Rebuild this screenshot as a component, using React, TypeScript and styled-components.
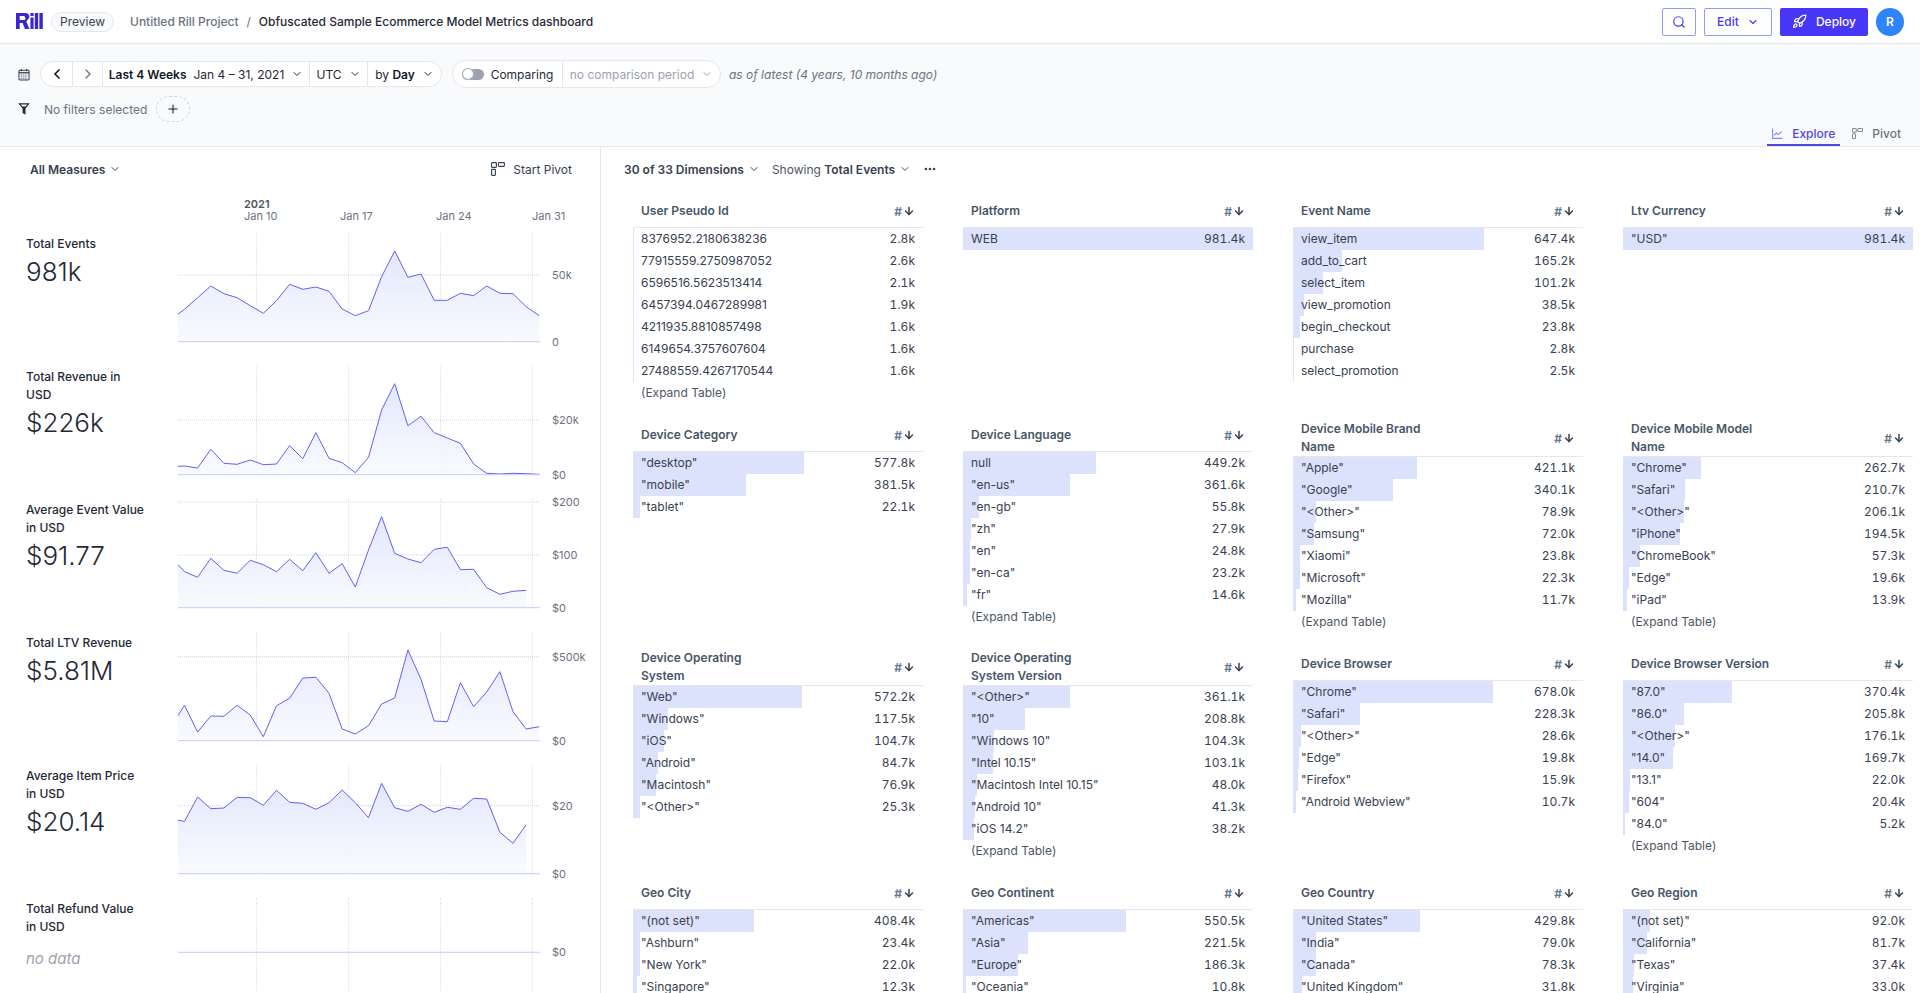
import styled, { createGlobalStyle } from "styled-components";
import { ArrowDown, ChevronDown, ChevronLeft, ChevronRight, Ellipsis, Plus, Rocket, Search } from "lucide-react";

const GlobalStyle = createGlobalStyle`
  html, body {
    margin: 0;
    height: 100%;
    overflow: hidden;
    background: #fff;
    font-family: Inter, "Noto Sans", sans-serif;
    font-size: 12px;
    color: #374151;
  }
`;

const Page = styled.div`
  display: flex;
  flex-direction: column;
  height: 100vh;
  overflow: hidden;
`;

const Header = styled.header`
  flex: none;
  box-sizing: border-box;
  display: flex;
  align-items: center;
  height: 44px;
  padding: 0 16px;
  border-bottom: 1px solid #e5e7eb;
`;

const Logo = styled.svg`
  width: 27px;
  height: 16px;
  flex: none;
  margin-top: -1px;
`;

const PreviewPill = styled.span`
  box-sizing: border-box;
  height: 20px;
  width: 63px;
  margin-left: 8px;
  border: 1px solid #e5e7eb;
  border-radius: 10px;
  background: #f9fafb;
  text-align: center;
  line-height: 18px;
  color: #374151;
`;

const Crumb = styled.span`
  margin-left: 16px;
  color: #6b7280;
  font-weight: 500;
`;

const Slash = styled.span`
  margin: 0 8px;
  color: #6b7280;
`;

const CrumbTitle = styled.span`
  color: #1f2937;
  font-weight: 500;
`;

const HeaderActions = styled.div`
  margin-left: auto;
  display: flex;
  align-items: center;
  gap: 8px;
`;

const OutlineButton = styled.button<{ $width: number }>`
  box-sizing: border-box;
  display: flex;
  align-items: center;
  justify-content: center;
  gap: 8px;
  width: ${(p) => p.$width}px;
  height: 28px;
  padding: 0;
  border: 1px solid #8f9bfb;
  border-radius: 2px;
  background: #fff;
  color: #4a3af0;
  font: 500 12px Inter, sans-serif;
`;

const DeployButton = styled.button`
  box-sizing: border-box;
  display: flex;
  align-items: center;
  justify-content: center;
  gap: 9px;
  width: 88px;
  height: 28px;
  padding: 0;
  border: none;
  border-radius: 2px;
  background: #4736f5;
  color: #fff;
  font: 500 12px Inter, sans-serif;
`;

const Avatar = styled.div`
  width: 28px;
  height: 28px;
  border-radius: 50%;
  background: #2f84fb;
  color: #fff;
  font-weight: 600;
  text-align: center;
  line-height: 28px;
`;

const Toolbar = styled.section`
  flex: none;
  display: flex;
  flex-direction: column;
  padding-top: 16px;
  background: #f9fafb;
  border-bottom: 1px solid #e5e7eb;
`;

const ToolRow = styled.div<{ $gap: number }>`
  display: flex;
  align-items: center;
  height: 28px;
  gap: ${(p) => p.$gap}px;
  padding-left: 18px;
`;

const FilterRow = styled(ToolRow)`
  height: 26px;
  margin-top: 8px;
`;

const TimePill = styled.div`
  box-sizing: border-box;
  display: flex;
  height: 26px;
  border: 1px solid #e5e7eb;
  border-radius: 13px;
  background: #fff;
  overflow: hidden;
`;

const Segment = styled.div<{ $width: number }>`
  box-sizing: border-box;
  display: flex;
  align-items: center;
  justify-content: center;
  gap: 7px;
  width: ${(p) => p.$width}px;
  color: #1f2937;
  & + & {
    border-left: 1px solid #e5e7eb;
  }
`;

const Strong = styled.b`
  font-weight: 600;
  color: #111827;
`;

const CompareWrap = styled(TimePill)`
  height: 28px;
  border-radius: 14px;
`;

const Toggle = styled.span`
  position: relative;
  display: block;
  width: 22px;
  height: 11px;
  border-radius: 6px;
  background: #9ca3af;
  &::after {
    content: "";
    position: absolute;
    left: 0;
    top: -0.5px;
    width: 12px;
    height: 12px;
    border-radius: 50%;
    background: #fff;
    box-shadow: 0 0 0 1px #9ca3af inset;
  }
`;

const Muted = styled.span`
  color: #9ca3af;
`;

const AsOf = styled.span`
  margin-left: -2px;
  font-style: italic;
  color: #6b7280;
`;

const NoFilters = styled.span`
  color: #6b7280;
`;

const AddFilter = styled.div`
  box-sizing: border-box;
  display: flex;
  align-items: center;
  justify-content: center;
  width: 34px;
  height: 26px;
  margin-left: -5px;
  border: 1px dashed #d1d5db;
  border-radius: 13px;
  color: #111827;
`;

const Tabs = styled.div`
  display: flex;
  justify-content: flex-end;
  gap: 7px;
  height: 24px;
  padding-right: 14px;
`;

const Tab = styled.div<{ $active?: boolean }>`
  box-sizing: border-box;
  display: flex;
  align-items: center;
  gap: 9px;
  padding: 0 5px 0 5px;
  height: 24px;
  font-weight: 500;
  color: ${(p) => (p.$active ? "#4f46e5" : "#6b7280")};
  border-bottom: 2px solid ${(p) => (p.$active ? "#4f46e5" : "transparent")};
`;

const Body = styled.main`
  flex: 1;
  display: flex;
  min-height: 0;
`;

const LeftPanel = styled.aside`
  flex: none;
  box-sizing: border-box;
  width: 601px;
  border-right: 1px solid #e5e7eb;
  overflow: hidden;
`;

const MeasuresBar = styled.div`
  display: flex;
  align-items: center;
  justify-content: space-between;
  height: 44px;
  padding: 0 28px 0 30px;
`;

const BarButton = styled.div`
  display: flex;
  align-items: center;
  gap: 4px;
  font-weight: 600;
  color: #374151;
`;

const PivotLink = styled.div`
  display: flex;
  align-items: center;
  gap: 8px;
  color: #374151;
`;

const TimeAxis = styled.svg`
  display: block;
  width: 422px;
  height: 42px;
  margin-left: 178px;
`;

const AxisYear = styled.text`
  font: 600 11px Inter, sans-serif;
  fill: #4b5563;
`;

const AxisLabel = styled.text`
  font: 400 11px Inter, sans-serif;
  fill: #6b7280;
`;

const MetricRow = styled.div`
  display: grid;
  grid-template-columns: 152px 422px;
  height: 133px;
  padding-left: 26px;
`;

const MetricInfo = styled.div`
  padding-top: 2px;
`;

const MetricTitle = styled.div`
  max-width: 119.5px;
  line-height: 18px;
  font-weight: 500;
  color: #1f2937;
`;

const MetricValue = styled.div`
  font-size: 26px;
  font-weight: 300;
  line-height: 38px;
  color: #1f2937;
`;

const NoData = styled.div`
  padding-top: 4px;
  font-size: 15px;
  font-style: italic;
  line-height: 38px;
  color: #9ca3af;
`;

const ChartSvg = styled.svg`
  display: block;
  width: 422px;
  height: 133px;
  overflow: visible;
`;

const RightPanel = styled.section`
  flex: 1;
  min-width: 0;
  overflow: hidden;
`;

const DimensionsBar = styled.div`
  display: flex;
  align-items: center;
  gap: 12px;
  height: 44px;
  padding-left: 23px;
`;

const Showing = styled.div`
  display: flex;
  align-items: center;
  gap: 4px;
  color: #4b5563;
  b {
    font-weight: 600;
    color: #374151;
  }
`;

const BoardGrid = styled.div`
  display: grid;
  grid-template-columns: repeat(4, 290px);
  column-gap: 40px;
  row-gap: 14px;
  align-items: start;
  padding: 3px 0 0 32px;
`;

const BoardHeader = styled.div<{ $tall: boolean }>`
  box-sizing: border-box;
  display: flex;
  align-items: center;
  justify-content: space-between;
  min-height: 34px;
  padding: ${(p) => (p.$tall ? "2px 8px 0 8px" : "1px 8px 0 8px")};
  border-bottom: 1.5px solid #e5e7eb;
`;

const BoardTitle = styled.div`
  max-width: 142px;
  line-height: 18px;
  font-weight: 600;
  color: #475569;
`;

const SortMark = styled.div`
  display: flex;
  align-items: center;
  gap: 1px;
  font-weight: 600;
  color: #64748b;
  svg {
    color: #374151;
  }
`;

const BoardRow = styled.div`
  position: relative;
  display: flex;
  justify-content: space-between;
  height: 22px;
  padding: 0 8px;
  line-height: 22px;
  color: #374151;
`;

const RowBar = styled.div`
  position: absolute;
  left: 0;
  top: 0;
  bottom: 0;
  background: #dce2fc;
`;

const RowLabel = styled.span`
  position: relative;
`;

const RowValue = styled.span`
  position: relative;
  font-variant-numeric: tabular-nums;
  font-feature-settings: "tnum";
`;

const ExpandRow = styled.div`
  height: 22px;
  padding-left: 8px;
  line-height: 22px;
  color: #4b5563;
`;

const TOTAL = 981.4;

type Board = { title: string; rows: [string, number][]; expand?: boolean };

const boards: Board[] = [
  {
    title: "User Pseudo Id",
    expand: true,
    rows: [
      ["8376952.2180638236", 2.8],
      ["77915559.2750987052", 2.6],
      ["6596516.5623513414", 2.1],
      ["6457394.0467289981", 1.9],
      ["4211935.8810857498", 1.6],
      ["6149654.3757607604", 1.6],
      ["27488559.4267170544", 1.6],
    ],
  },
  { title: "Platform", rows: [["WEB", 981.4]] },
  {
    title: "Event Name",
    rows: [
      ["view_item", 647.4],
      ["add_to_cart", 165.2],
      ["select_item", 101.2],
      ["view_promotion", 38.5],
      ["begin_checkout", 23.8],
      ["purchase", 2.8],
      ["select_promotion", 2.5],
    ],
  },
  { title: "Ltv Currency", rows: [['"USD"', 981.4]] },
  {
    title: "Device Category",
    rows: [
      ['"desktop"', 577.8],
      ['"mobile"', 381.5],
      ['"tablet"', 22.1],
    ],
  },
  {
    title: "Device Language",
    expand: true,
    rows: [
      ["null", 449.2],
      ['"en-us"', 361.6],
      ['"en-gb"', 55.8],
      ['"zh"', 27.9],
      ['"en"', 24.8],
      ['"en-ca"', 23.2],
      ['"fr"', 14.6],
    ],
  },
  {
    title: "Device Mobile Brand Name",
    expand: true,
    rows: [
      ['"Apple"', 421.1],
      ['"Google"', 340.1],
      ['"<Other>"', 78.9],
      ['"Samsung"', 72.0],
      ['"Xiaomi"', 23.8],
      ['"Microsoft"', 22.3],
      ['"Mozilla"', 11.7],
    ],
  },
  {
    title: "Device Mobile Model Name",
    expand: true,
    rows: [
      ['"Chrome"', 262.7],
      ['"Safari"', 210.7],
      ['"<Other>"', 206.1],
      ['"iPhone"', 194.5],
      ['"ChromeBook"', 57.3],
      ['"Edge"', 19.6],
      ['"iPad"', 13.9],
    ],
  },
  {
    title: "Device Operating System",
    rows: [
      ['"Web"', 572.2],
      ['"Windows"', 117.5],
      ['"iOS"', 104.7],
      ['"Android"', 84.7],
      ['"Macintosh"', 76.9],
      ['"<Other>"', 25.3],
    ],
  },
  {
    title: "Device Operating System Version",
    expand: true,
    rows: [
      ['"<Other>"', 361.1],
      ['"10"', 208.8],
      ['"Windows 10"', 104.3],
      ['"Intel 10.15"', 103.1],
      ['"Macintosh Intel 10.15"', 48.0],
      ['"Android 10"', 41.3],
      ['"iOS 14.2"', 38.2],
    ],
  },
  {
    title: "Device Browser",
    rows: [
      ['"Chrome"', 678.0],
      ['"Safari"', 228.3],
      ['"<Other>"', 28.6],
      ['"Edge"', 19.8],
      ['"Firefox"', 15.9],
      ['"Android Webview"', 10.7],
    ],
  },
  {
    title: "Device Browser Version",
    expand: true,
    rows: [
      ['"87.0"', 370.4],
      ['"86.0"', 205.8],
      ['"<Other>"', 176.1],
      ['"14.0"', 169.7],
      ['"13.1"', 22.0],
      ['"604"', 20.4],
      ['"84.0"', 5.2],
    ],
  },
  {
    title: "Geo City",
    rows: [
      ['"(not set)"', 408.4],
      ['"Ashburn"', 23.4],
      ['"New York"', 22.0],
      ['"Singapore"', 12.3],
    ],
  },
  {
    title: "Geo Continent",
    rows: [
      ['"Americas"', 550.5],
      ['"Asia"', 221.5],
      ['"Europe"', 186.3],
      ['"Oceania"', 10.8],
    ],
  },
  {
    title: "Geo Country",
    rows: [
      ['"United States"', 429.8],
      ['"India"', 79.0],
      ['"Canada"', 78.3],
      ['"United Kingdom"', 31.8],
    ],
  },
  {
    title: "Geo Region",
    rows: [
      ['"(not set)"', 92.0],
      ['"California"', 81.7],
      ['"Texas"', 37.4],
      ['"Virginia"', 33.0],
    ],
  },
];

type Metric = {
  title: string;
  value?: string;
  ticks: [string, number][];
  points?: number[];
};

const metrics: Metric[] = [
  {
    title: "Total Events",
    value: "981k",
    ticks: [["50k", 42], ["0", 108.7]],
    points: [
      81, 76.3, 64.7, 53, 60.7, 64.7, 72.7, 80.3, 67.7, 51.3, 56.3, 54, 58.3, 76, 82.7, 77.7, 43.7, 18, 44.3, 41, 67.3,
      67.3, 60.3, 62.7, 53, 60.3, 60.7, 73.7, 82.7,
    ],
  },
  {
    title: "Total Revenue in USD",
    value: "$226k",
    ticks: [["$20k", 54], ["$0", 108.7]],
    points: [
      100.3, 100, 102, 83.3, 97.3, 98.3, 94, 98.7, 98, 79.7, 92.7, 66.7, 92.3, 96.7, 106.7, 91.3, 44, 17.7, 59.7, 50.3,
      66.7, 72, 77.3, 98, 107.3, 108, 107.3, 107.7, 108.3,
    ],
  },
  {
    title: "Average Event Value in USD",
    value: "$91.77",
    ticks: [["$200", 3], ["$100", 56], ["$0", 108.7]],
    points: [
      65.7, 72.7, 78.3, 59.3, 71.3, 74.3, 61.3, 65.7, 72.7, 60.3, 71.7, 53.7, 74.3, 64.7, 88, 51, 17.7, 54.3, 60, 63.7,
      50.3, 48.3, 70.7, 70.3, 88.7, 95.3, 92.3, 91.3,
    ],
  },
  {
    title: "Total LTV Revenue",
    value: "$5.81M",
    ticks: [["$500k", 24.7], ["$0", 108.7]],
    points: [
      83.7, 73.3, 100, 84, 84.3, 73.3, 83, 104.7, 73.7, 66.3, 46, 45.3, 61.3, 97, 102, 93.7, 72, 66, 18, 47.3, 89, 89.7,
      50.7, 74.7, 60, 39.7, 79.7, 97, 94.7,
    ],
  },
  {
    title: "Average Item Price in USD",
    value: "$20.14",
    ticks: [["$20", 40.7], ["$0", 108.7]],
    points: [
      55.3, 56.3, 32, 43.7, 43, 32.3, 32.7, 40.3, 25.3, 37.3, 38.3, 44.3, 37.7, 25, 37.7, 52.7, 18.3, 42.7, 46.3, 39.3,
      47.3, 42.3, 44.3, 33.3, 34, 67.3, 78.3, 59.7,
    ],
  },
  { title: "Total Refund Value in USD", ticks: [["$0", 54.3]] },
];

const gridX = [78.4, 170.6, 262.5, 354.3];

const pointX = (i: number) => (i === 0 ? 0 : 6.5 + (i - 1) * 13.14);

const MetricChart = ({ metric, id }: { metric: Metric; id: string }) => {
  const { points, ticks } = metric;
  const line = points?.map((y, i) => `${i === 0 ? "M" : "L"}${pointX(i).toFixed(1)} ${y}`).join(" ");
  const endX = points ? pointX(points.length - 1).toFixed(1) : "0";
  const gridBottom = points ? 108.7 : 133;
  const zeroY = ticks[ticks.length - 1][1];
  return (
    <ChartSvg viewBox="0 0 422 133">
      <defs>
        <linearGradient id={id} x1="0" y1="0" x2="0" y2="1">
          <stop offset="0%" stopColor="#dde3fc" />
          <stop offset="100%" stopColor="#f9faff" />
        </linearGradient>
      </defs>
      {gridX.map((x) => (
        <line key={x} x1={x} x2={x} y1={0} y2={gridBottom} stroke="#d1d5db" strokeDasharray="1 1.5" />
      ))}
      {points &&
        ticks.slice(0, -1).map(([label, y]) => (
          <line key={label} x1={0} x2={362} y1={y} y2={y} stroke="#d1d5db" strokeDasharray="1 1" />
        ))}
      {points && (
        <>
          <path d={`${line} L${endX} 108.7 L0 108.7 Z`} fill={`url(#${id})`} fillOpacity="0.85" />
          <path d={line} fill="none" stroke="#6360f5" strokeWidth="1" strokeLinejoin="round" />
        </>
      )}
      <line x1={0} x2={362} y1={zeroY} y2={zeroY} stroke="#c3cbfb" />
      {ticks.map(([label, y]) => (
        <AxisLabel key={label} x={374} y={y + 4}>
          {label}
        </AxisLabel>
      ))}
    </ChartSvg>
  );
};

const PivotIcon = ({ size, color }: { size: number; color: string }) => (
  <svg width={size} height={size} viewBox="0 0 14 14" fill="none" stroke={color} strokeWidth="1.1">
    <rect x="0.6" y="0.6" width="4.8" height="4.8" rx="0.6" />
    <rect x="7.4" y="0.6" width="6" height="3.8" rx="0.6" />
    <rect x="0.6" y="7.4" width="3.8" height="6" rx="0.6" />
  </svg>
);

const CalendarIcon = () => (
  <svg width="12" height="13" viewBox="0 0 13 13" fill="none" stroke="#374151">
    <rect x="1" y="2" width="11" height="10.4" rx="1" strokeWidth="1.1" />
    <path d="M1 4.6h11" strokeWidth="1.4" />
    <path d="M3.6 0.5v2.4M9.4 0.5v2.4" strokeWidth="1.2" />
    <path d="M3 7h7M3 9h7M3 11h7" strokeWidth="0.9" strokeDasharray="1.2 0.9" />
  </svg>
);

const FunnelIcon = () => (
  <svg width="12" height="12" viewBox="0 0 12 12">
    <path d="M0.2 0.3h11.6L7.5 5.6V11.8L4.6 10V5.6Z" fill="#1f2937" />
    <path d="M2.6 1.6h6.8L7.6 3.4H4.4Z" fill="#f9fafb" />
  </svg>
);

const ExploreIcon = () => (
  <svg width="11" height="11" viewBox="0 0 11 11" fill="none" stroke="#818cf8" strokeWidth="1.1">
    <path d="M0.6 0.5v9.9h9.9" />
    <path d="M2 7.4l2.4-2.4 1.8 1.6 3.4-3" />
  </svg>
);

const RillLogo = () => (
  <Logo viewBox="0 0 27 16" fill="#3a27cf">
    <path
      d="M0 0h9.5a3.6 3.6 0 0 1 3 5.8L10.4 8.6l3 7.4H9L6.6 10H3.7v6H0Z M3.7 3v4h4.6a1.2 1.2 0 0 0 1-1.9L8.4 3Z"
      fillRule="evenodd"
    />
    <rect x="14.4" y="0" width="3.2" height="3" />
    <rect x="14.4" y="4.5" width="3.2" height="11.5" />
    <rect x="18.8" y="0" width="3.4" height="16" />
    <rect x="23.4" y="0" width="3.4" height="16" />
  </Logo>
);

const BoardTable = ({ board }: { board: Board }) => (
  <div>
    <BoardHeader $tall={board.title.length > 22}>
      <BoardTitle>{board.title}</BoardTitle>
      <SortMark>
        # <ArrowDown size={12} strokeWidth={3} />
      </SortMark>
    </BoardHeader>
    {board.rows.map(([label, value]) => (
      <BoardRow key={label}>
        <RowBar style={{ width: `${(value / TOTAL) * 100}%` }} />
        <RowLabel>{label}</RowLabel>
        <RowValue>{value.toFixed(1)}k</RowValue>
      </BoardRow>
    ))}
    {board.expand && <ExpandRow>(Expand Table)</ExpandRow>}
  </div>
);

const App = () => {
  return (
    <Page>
      <GlobalStyle />
      <Header>
        <RillLogo />
        <PreviewPill>Preview</PreviewPill>
        <Crumb>Untitled Rill Project</Crumb>
        <Slash>/</Slash>
        <CrumbTitle>Obfuscated Sample Ecommerce Model Metrics dashboard</CrumbTitle>
        <HeaderActions>
          <OutlineButton $width={34}>
            <Search size={14} />
          </OutlineButton>
          <OutlineButton $width={68}>
            Edit <ChevronDown size={12} strokeWidth={2.2} />
          </OutlineButton>
          <DeployButton>
            <Rocket size={15} />
            Deploy
          </DeployButton>
          <Avatar>R</Avatar>
        </HeaderActions>
      </Header>

      <Toolbar>
        <ToolRow $gap={10}>
          <CalendarIcon />
          <TimePill>
            <Segment $width={31}>
              <ChevronLeft size={16} strokeWidth={2.6} color="#111827" />
            </Segment>
            <Segment $width={30}>
              <ChevronRight size={16} strokeWidth={2} color="#6b7280" />
            </Segment>
            <Segment $width={207}>
              <Strong>Last 4 Weeks</Strong> Jan 4 – 31, 2021 <ChevronDown size={12} />
            </Segment>
            <Segment $width={58}>
              UTC <ChevronDown size={12} />
            </Segment>
            <Segment $width={74}>
              <span>
                by <Strong>Day</Strong>
              </span>
              <ChevronDown size={12} />
            </Segment>
          </TimePill>
          <CompareWrap>
            <Segment $width={109}>
              <Toggle />
              Comparing
            </Segment>
            <Segment $width={158}>
              <Muted>no comparison period</Muted>
              <ChevronDown size={12} color="#9ca3af" />
            </Segment>
          </CompareWrap>
          <AsOf>as of latest (4 years, 10 months ago)</AsOf>
        </ToolRow>
        <FilterRow $gap={14}>
          <FunnelIcon />
          <NoFilters>No filters selected</NoFilters>
          <AddFilter>
            <Plus size={14} strokeWidth={1.8} />
          </AddFilter>
        </FilterRow>
        <Tabs>
          <Tab $active>
            <ExploreIcon />
            Explore
          </Tab>
          <Tab>
            <PivotIcon size={11} color="#6b7280" />
            Pivot
          </Tab>
        </Tabs>
      </Toolbar>

      <Body>
        <LeftPanel>
          <MeasuresBar>
            <BarButton>
              All Measures <ChevronDown size={12} strokeWidth={2} />
            </BarButton>
            <PivotLink>
              <PivotIcon size={14} color="#374151" />
              Start Pivot
            </PivotLink>
          </MeasuresBar>
          <TimeAxis viewBox="0 0 422 42">
            <AxisYear x={66} y={17}>
              2021
            </AxisYear>
            <AxisLabel x={66} y={29}>
              Jan 10
            </AxisLabel>
            <AxisLabel x={162} y={29}>
              Jan 17
            </AxisLabel>
            <AxisLabel x={258} y={29}>
              Jan 24
            </AxisLabel>
            <AxisLabel x={354} y={29}>
              Jan 31
            </AxisLabel>
          </TimeAxis>
          {metrics.map((metric, i) => (
            <MetricRow key={metric.title}>
              <MetricInfo>
                <MetricTitle>{metric.title}</MetricTitle>
                {metric.value ? <MetricValue>{metric.value}</MetricValue> : <NoData>no data</NoData>}
              </MetricInfo>
              <MetricChart metric={metric} id={`area-${i}`} />
            </MetricRow>
          ))}
        </LeftPanel>

        <RightPanel>
          <DimensionsBar>
            <BarButton>
              30 of 33 Dimensions <ChevronDown size={12} strokeWidth={2} />
            </BarButton>
            <Showing>
              <span>
                Showing <b>Total Events</b>
              </span>
              <ChevronDown size={12} strokeWidth={2} />
            </Showing>
            <Ellipsis size={14} strokeWidth={2.6} color="#374151" />
          </DimensionsBar>
          <BoardGrid>
            {boards.map((board) => (
              <BoardTable key={board.title} board={board} />
            ))}
          </BoardGrid>
        </RightPanel>
      </Body>
    </Page>
  );
};

export default App;
